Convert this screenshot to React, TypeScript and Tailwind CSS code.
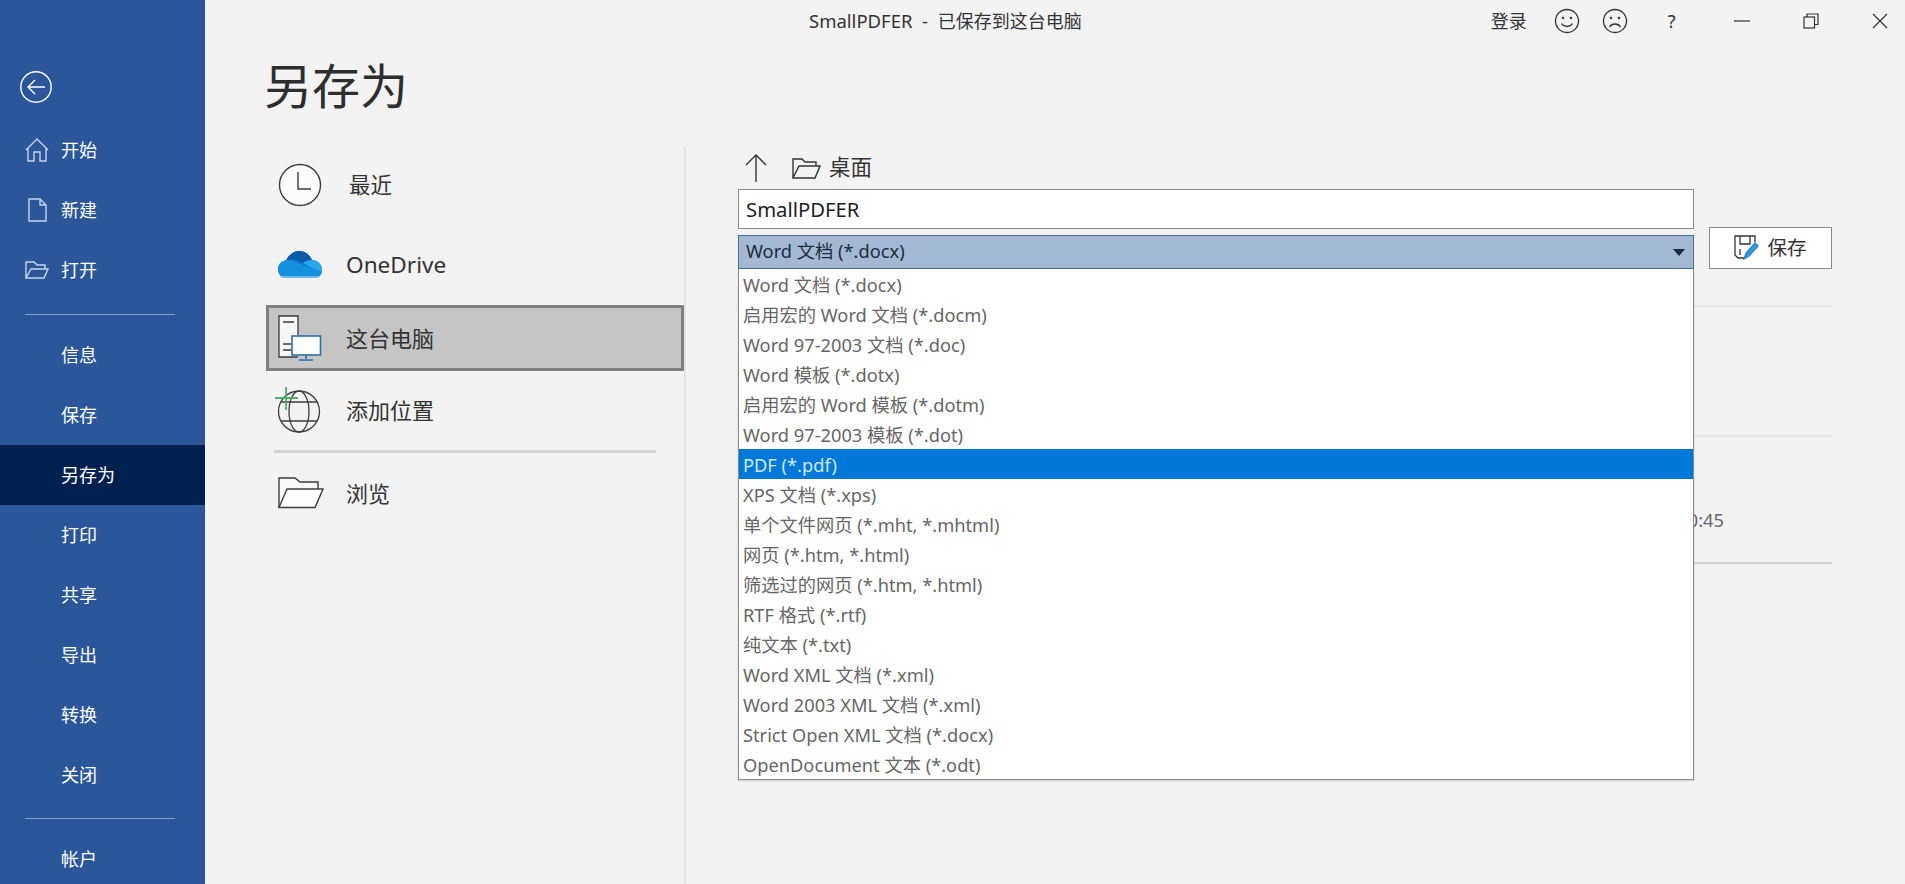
import React from "react";

const FONT = "font-['Noto_Sans','Noto_Sans_CJK_SC',sans-serif]";

function NavItem({ label, active }: { label: string; active?: boolean }) {
  return (
    <div className={`flex h-[60px] shrink-0 items-center pl-[61px] text-[18px] text-white ${active ? "bg-[#002050]" : ""}`}>
      {label}
    </div>
  );
}

function NavIconItem({ label, children }: { label: string; children: React.ReactNode }) {
  return (
    <div className="flex h-[60px] shrink-0 items-center text-[18px] text-white">
      <div className="flex w-[61px] justify-start">{children}</div>
      {label}
    </div>
  );
}

function Clock() {
  return (
    <svg width="44" height="44" viewBox="0 0 44 44" fill="none" stroke="#3d3d3d" strokeWidth="1.4">
      <circle cx="22" cy="22" r="20.5" fill="#fbfbfb" />
      <path d="M20 9v17h13" />
    </svg>
  );
}

function Cloud() {
  return (
    <svg width="44" height="30" viewBox="0 0 44 30">
      <path d="M8 27C3 27 0 23 0 19c0-5 4-8 8-8 2-6 8-10 13-10 6 0 10 3 13 9 5 0 10 4 10 10 0 4-3 7-7 7Z" fill="#0f78d4" />
      <path d="M8 11c2-6 8-10 13-10 6 0 10 3 13 9-5 0-8 2-9 3l-7-3c-4-1-7 0-10 1Z" fill="#0a5ba8" />
      <path d="M0 19c0-5 5-10 12-9l6 2 7 3 19 7c-1 3-3 6-7 6H8C3 28 0 24 0 19Z" fill="#1490df" />
      <path d="M25 13c3-2 6-3 9-3 5 0 10 4 10 10v2l-12-5Z" fill="#28a8ea" />
      <path d="M3 28h34c2 0 4-1 5-2H2Z" fill="#8fc8ee" opacity="0.7" />
    </svg>
  );
}

function Computer() {
  return (
    <svg width="44" height="46" viewBox="0 0 44 46" fill="none" stroke="#3a3a3a" strokeWidth="1.3">
      <path d="M20 20V1H1v41h19" fill="#f6f6f6" />
      <path d="M5 7h11M5 29h8M5 35h8" />
      <rect x="14" y="21" width="28.5" height="19" fill="#fdfdfd" stroke="#2a6ea6" strokeWidth="1.6" />
      <path d="M28 40v4M21 45h14" stroke="#2a6ea6" strokeWidth="1.6" />
    </svg>
  );
}

function Globe() {
  return (
    <svg width="46" height="46" viewBox="0 0 46 46" fill="none" stroke="#3d3d3d" strokeWidth="1.3">
      <circle cx="24" cy="24.5" r="20.5" />
      <ellipse cx="24" cy="24.5" rx="10" ry="20.5" />
      <path d="M6 15h36M6 34h36" />
      <path d="M11 0v23M0 11h23" stroke="#4caf6b" strokeWidth="1.8" />
    </svg>
  );
}

function OpenFolderLarge() {
  return (
    <svg width="46" height="32" viewBox="0 0 46 32" fill="none" stroke="#3d3d3d" strokeWidth="1.4">
      <path d="M1 30.5V1h16l5 4h18v7" fill="#fafafa" />
      <path d="M1 30.5 9 12h36l-8 18.5Z" fill="#fdfdfd" />
    </svg>
  );
}

function PlaceRow({ icon, label, className, textClass }: { icon: React.ReactNode; label: string; className: string; textClass?: string }) {
  return (
    <div className={`flex shrink-0 items-center ${className}`}>
      <div className="flex w-[46px] justify-start">{icon}</div>
      <span className={`text-[#333333] ${textClass ?? "ml-[22px] text-[22px]"}`}>{label}</span>
    </div>
  );
}

const FORMATS = [
  "Word 文档 (*.docx)",
  "启用宏的 Word 文档 (*.docm)",
  "Word 97-2003 文档 (*.doc)",
  "Word 模板 (*.dotx)",
  "启用宏的 Word 模板 (*.dotm)",
  "Word 97-2003 模板 (*.dot)",
  "PDF (*.pdf)",
  "XPS 文档 (*.xps)",
  "单个文件网页 (*.mht, *.mhtml)",
  "网页 (*.htm, *.html)",
  "筛选过的网页 (*.htm, *.html)",
  "RTF 格式 (*.rtf)",
  "纯文本 (*.txt)",
  "Word XML 文档 (*.xml)",
  "Word 2003 XML 文档 (*.xml)",
  "Strict Open XML 文档 (*.docx)",
  "OpenDocument 文本 (*.odt)",
];

export default function App() {
  return (
    <div className={`flex h-[884px] w-[1905px] overflow-hidden bg-[#f3f3f3] ${FONT}`}>
      <aside className="flex w-[205px] shrink-0 flex-col overflow-hidden bg-[#2b579a]">
        <div className="flex h-[120px] shrink-0 items-start pl-[20px] pt-[71px]">
          <svg width="32" height="32" viewBox="0 0 32 32" fill="none" stroke="#ffffff" strokeWidth="1.4">
            <circle cx="16" cy="16" r="15.2" />
            <path d="M8 16h17M15 9l-7 7 7 7" />
          </svg>
        </div>
        <NavIconItem label="开始">
          <svg width="24" height="24" viewBox="0 0 24 24" fill="none" stroke="#c5d5ee" strokeWidth="1.4" className="ml-[25px]">
            <path d="M1 12 12 1l11 11M3 10v13h6v-9h6v9h6V10" />
          </svg>
        </NavIconItem>
        <NavIconItem label="新建">
          <svg width="19" height="24" viewBox="0 0 19 24" fill="none" stroke="#c5d5ee" strokeWidth="1.4" className="ml-[28px]">
            <path d="M1 1v22h17V7l-6-6Zm11 0v6h6" />
          </svg>
        </NavIconItem>
        <NavIconItem label="打开">
          <svg width="24" height="18" viewBox="0 0 24 18" fill="none" stroke="#c5d5ee" strokeWidth="1.4" className="ml-[25px]">
            <path d="M1 17V1h8l3 3h8v4M1 17 6 8h17l-4 9Z" />
          </svg>
        </NavIconItem>
        <div className="mb-[10px] ml-[25px] mt-[14px] h-[1px] w-[150px] shrink-0 bg-[#7a9ed2]" />
        <NavItem label="信息" />
        <NavItem label="保存" />
        <NavItem label="另存为" active />
        <NavItem label="打印" />
        <NavItem label="共享" />
        <NavItem label="导出" />
        <NavItem label="转换" />
        <NavItem label="关闭" />
        <div className="mb-[10px] ml-[25px] mt-[13px] h-[1px] w-[150px] shrink-0 bg-[#7a9ed2]" />
        <NavItem label="帐户" />
      </aside>

      <main className="flex min-w-0 flex-1 flex-col">
        <header className="flex h-[42px] shrink-0 items-center text-[18px] text-[#333333]">
          <span className="ml-[604px] whitespace-pre text-[18.5px]">{"SmallPDFER  -  "}<span className="text-[18px]">已保存到这台电脑</span></span>
          <span className="ml-[409px] text-[18px]">登录</span>
          <svg width="26" height="26" viewBox="0 0 26 26" fill="none" stroke="#333" strokeWidth="1.3" className="ml-[27px]">
            <circle cx="13" cy="13" r="11.5" />
            <circle cx="9" cy="10" r="1.2" fill="#333" stroke="none" />
            <circle cx="17" cy="10" r="1.2" fill="#333" stroke="none" />
            <path d="M7.5 15.5c2.5 4 8.5 4 11 0" />
          </svg>
          <svg width="26" height="26" viewBox="0 0 26 26" fill="none" stroke="#333" strokeWidth="1.3" className="ml-[22px]">
            <circle cx="13" cy="13" r="11.5" />
            <circle cx="9" cy="10" r="1.2" fill="#333" stroke="none" />
            <circle cx="17" cy="10" r="1.2" fill="#333" stroke="none" />
            <path d="M7.5 19c2.5-4 8.5-4 11 0" />
          </svg>
          <span className="ml-[40px] text-[18px]">?</span>
          <svg width="16" height="16" viewBox="0 0 16 16" fill="none" stroke="#333" strokeWidth="1.2" className="ml-[59px]">
            <path d="M0 8h16" />
          </svg>
          <svg width="16" height="16" viewBox="0 0 16 16" fill="none" stroke="#333" strokeWidth="1.2" className="ml-[53px]">
            <rect x="1" y="4" width="10.5" height="11" />
            <path d="M4 4V1h11v10.5h-3.5" />
          </svg>
          <svg width="16" height="16" viewBox="0 0 16 16" fill="none" stroke="#333" strokeWidth="1.2" className="ml-[53px]">
            <path d="M1 1l14 14M15 1 1 15" />
          </svg>
        </header>

        <h1 className="ml-[59px] h-[105px] shrink-0 pt-[20px] text-[48px] font-normal leading-[1] text-[#2e2e2e]">另存为</h1>

        <div className="flex min-h-0 flex-1">
          <div className="ml-[61px] flex w-[420px] shrink-0 flex-col border-r-2 border-[#e3e3e3]">
            <PlaceRow icon={<Clock />} label="最近" className="h-[76px] pl-[12px]" textClass="ml-[25px] text-[21.5px]" />
            <PlaceRow icon={<Cloud />} label="OneDrive" className="h-[82px] pl-[12px] pt-[2px]" textClass="ml-[22px] text-[22.6px]" />
            <PlaceRow icon={<Computer />} label="这台电脑" className="h-[66px] border-[3px] border-[#808080] bg-[#c5c5c5] pl-[9px]" />
            <PlaceRow icon={<Globe />} label="添加位置" className="h-[78px] pl-[9px]" textClass="ml-[25px] text-[22px]" />
            <div className="ml-[8px] mt-[1px] h-[3px] w-[382px] shrink-0 bg-[#d4d4d4]" />
            <PlaceRow icon={<OpenFolderLarge />} label="浏览" className="h-[80px] pl-[12px]" />
          </div>

          <div className="ml-[52px] flex w-[1094px] shrink-0 flex-col">
            <div className="relative z-10 flex w-full items-end gap-[15px]">
              <div className="w-[956px] shrink-0">
                <div className="flex h-[42px] items-center text-[21.5px] text-[#333333]">
                  <svg width="24" height="30" viewBox="0 0 24 30" fill="none" stroke="#333" strokeWidth="1.4" className="ml-[6px]">
                    <path d="M12 29V2M2 12 12 2l10 10" />
                  </svg>
                  <svg width="29" height="22" viewBox="0 0 29 22" fill="none" stroke="#333" strokeWidth="1.4" className="ml-[24px]">
                    <path d="M1 21V2h9l3 3h11v4M1 21 7 9h21l-5 12Z" />
                  </svg>
                  <span className="ml-[8px] pb-[2px]">桌面</span>
                </div>
                <div className="flex h-[40px] items-center border border-[#8a8a8a] bg-white pl-[7px] text-[20.3px] text-[#222222]">
                  SmallPDFER
                </div>
                <div className="relative mt-[6px]">
                  <div className="flex h-[34px] items-center justify-between border border-[#4a6a92] bg-[#a3b8d3] px-[7px] text-[18.25px] text-[#1c2b3d]">
                    <span className="pb-[2px]">Word 文档 (*.docx)</span>
                    <svg width="12" height="7" viewBox="0 0 12 7" className="mr-[1px]">
                      <path d="M0 0h12L6 7Z" fill="#1c2b3d" />
                    </svg>
                  </div>
                  <ul className="absolute left-0 top-full w-full border-x border-b border-[#8a8a8a] bg-white shadow-[0_1px_2px_rgba(0,0,0,0.15)]">
                    {FORMATS.map((f) =>
                      f.startsWith("PDF") ? (
                        <li key={f} className="flex h-[30px] items-center bg-[#0078d7] pl-[4px] pt-[1px] text-[18.25px] text-[#cfe8ff]">{f}</li>
                      ) : (
                        <li key={f} className="flex h-[30px] items-center pl-[4px] pt-[1px] text-[18.25px] text-[#666666]">{f}</li>
                      )
                    )}
                  </ul>
                </div>
              </div>
              <button className="flex h-[42px] w-[123px] items-center justify-center border border-[#8a8a8a] bg-white text-[19.5px] text-[#333333]">
                <svg width="26" height="26" viewBox="0 0 26 26" fill="none" stroke="#333" strokeWidth="1.3" className="mr-[7px]">
                  <path d="M10 23H4l-3-3V1h20v6" />
                  <path d="M6 1v8h10V1M6 14v6" />
                  <path d="M10 24l2-6L21 8l3 3-9 10Z" fill="#3a9ad9" stroke="#2a86c4" />
                </svg>
                保存
              </button>
            </div>

            <div className="h-[38px] shrink-0 border-b-2 border-[#e6e6e6]" />
            <div className="h-[130px] shrink-0 border-b-2 border-[#e6e6e6]" />
            <div className="flex h-[127px] shrink-0 items-center justify-end border-b-2 border-[#d2d2d2] pr-[108px] pt-[40px] text-[18.25px] text-[#666666]">
              10:45
            </div>
          </div>
        </div>
      </main>
    </div>
  );
}
